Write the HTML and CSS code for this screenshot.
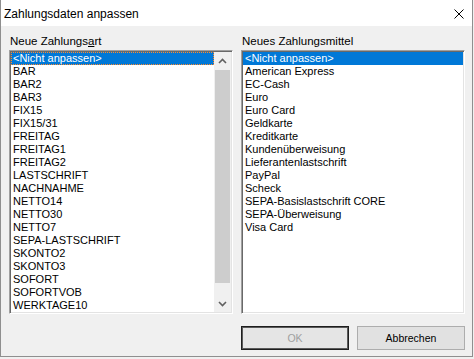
FILE: index.html
```html
<!DOCTYPE html>
<html lang="de">
<head>
<meta charset="utf-8">
<title>Zahlungsdaten anpassen</title>
<link rel="stylesheet" href="styles.css">
</head>
<body>
<div class="window">
  <div class="titlebar">
    <span class="title">Zahlungsdaten anpassen</span>
    <span class="close">
      <svg width="10" height="10" viewBox="0 0 10 10"><path d="M0.5 0.5 L9.5 9.5 M9.5 0.5 L0.5 9.5" stroke="#000" stroke-width="1" fill="none"/></svg>
    </span>
  </div>
  <div class="content">
    <div class="columns">
      <div class="column">
        <div class="label">Neue Zahlungs<u>a</u>rt</div>
        <div class="listbox">
          <ul class="items">
            <li class="selected focused">&lt;Nicht anpassen&gt;</li>
            <li>BAR</li>
            <li>BAR2</li>
            <li>BAR3</li>
            <li>FIX15</li>
            <li>FIX15/31</li>
            <li>FREITAG</li>
            <li>FREITAG1</li>
            <li>FREITAG2</li>
            <li>LASTSCHRIFT</li>
            <li>NACHNAHME</li>
            <li>NETTO14</li>
            <li>NETTO30</li>
            <li>NETTO7</li>
            <li>SEPA-LASTSCHRIFT</li>
            <li>SKONTO2</li>
            <li>SKONTO3</li>
            <li>SOFORT</li>
            <li>SOFORTVOB</li>
            <li>WERKTAGE10</li>
          </ul>
          <div class="scrollbar">
            <div class="arrow">
              <svg width="9" height="6" viewBox="0 0 9 6"><path d="M1 5 L4.5 1.5 L8 5" stroke="#606060" stroke-width="1.6" fill="none"/></svg>
            </div>
            <div class="track">
              <div class="thumb"></div>
            </div>
            <div class="arrow">
              <svg width="9" height="6" viewBox="0 0 9 6"><path d="M1 1 L4.5 4.5 L8 1" stroke="#606060" stroke-width="1.6" fill="none"/></svg>
            </div>
          </div>
        </div>
      </div>
      <div class="column">
        <div class="label">Neues Zahlungsmittel</div>
        <div class="listbox">
          <ul class="items">
            <li class="selected">&lt;Nicht anpassen&gt;</li>
            <li>American Express</li>
            <li>EC-Cash</li>
            <li>Euro</li>
            <li>Euro Card</li>
            <li>Geldkarte</li>
            <li>Kreditkarte</li>
            <li>Kundenüberweisung</li>
            <li>Lieferantenlastschrift</li>
            <li>PayPal</li>
            <li>Scheck</li>
            <li>SEPA-Basislastschrift CORE</li>
            <li>SEPA-Überweisung</li>
            <li>Visa Card</li>
          </ul>
        </div>
      </div>
    </div>
    <div class="buttons">
      <button class="btn default" disabled>OK</button>
      <button class="btn">Abbrechen</button>
    </div>
  </div>
</div>
</body>
</html>
```
FILE: styles.css
```css
html, body {
  margin: 0;
  padding: 0;
}
body {
  width: 474px;
  height: 359px;
  background: #f0f0f0;
  font-family: "Liberation Sans", Arial, sans-serif;
  color: #000;
  overflow: hidden;
}
.window {
  width: 471px;
  height: 356px;
  border: 1px solid #8f8f8f;
  border-top: none;
  background: #f0f0f0;
  display: flex;
  flex-direction: column;
}
.titlebar {
  height: 26px;
  background: #fff;
  display: flex;
  align-items: center;
  justify-content: space-between;
  padding: 0 8px 0 3px;
  flex: none;
}
.title {
  font-size: 12px;
  line-height: 14px;
  margin-top: 1px;
}
.close {
  display: flex;
  margin-top: 1px;
}
.content {
  padding: 8px 7px 6px 8px;
  display: flex;
  flex-direction: column;
}
.columns {
  display: flex;
  gap: 8px;
}
.column {
  width: 224px;
  display: flex;
  flex-direction: column;
}
.column + .column {
  width: 224px;
}
.label {
  font-size: 11.5px;
  line-height: 14px;
  height: 14px;
  margin-bottom: 2px;
  padding-left: 1px;
}
.label u {
  text-decoration-thickness: 1px;
  text-underline-offset: 1px;
}
.listbox {
  height: 264px;
  box-sizing: border-box;
  background: #fff;
  border: 1px solid;
  border-color: #a0a0a0 #fff #fff #a0a0a0;
  box-shadow: inset 1px 1px 0 #696969, inset -1px -1px 0 #e3e3e3;
  padding: 1px;
  display: flex;
  overflow: hidden;
}
.items {
  list-style: none;
  margin: 0;
  padding: 0;
  flex: 1;
  min-width: 0;
}
.items li {
  height: 13px;
  line-height: 13px;
  font-size: 11px;
  padding-left: 2px;
  white-space: nowrap;
}
.items li.selected {
  background: #0078d7;
  color: #fff;
}
.items li.focused {
  outline: 1px dotted #ff8a2a;
  outline-offset: -1px;
}
.scrollbar {
  width: 17px;
  flex: none;
  background: #f0f0f0;
  display: flex;
  flex-direction: column;
}
.arrow {
  height: 17px;
  display: flex;
  align-items: center;
  justify-content: center;
  flex: none;
}
.track {
  flex: 1;
  padding: 1px 1px 12px 1px;
  display: flex;
  flex-direction: column;
}
.thumb {
  flex: 1;
  background: #cdcdcd;
}
.buttons {
  margin-top: 12px;
  display: flex;
  justify-content: flex-end;
  gap: 8px;
}
.btn {
  width: 108px;
  height: 24px;
  box-sizing: border-box;
  margin: 0;
  padding: 0;
  font-family: "Liberation Sans", Arial, sans-serif;
  font-size: 10.5px;
  background: #e1e1e1;
  border: 1px solid #adadad;
  color: #000;
}
.btn.default {
  border: 1px solid #1e1e1e;
  box-shadow: inset 0 0 0 1px #5a5a5a;
  color: #a0a0a0;
  background: #e5e5e5;
}
```
